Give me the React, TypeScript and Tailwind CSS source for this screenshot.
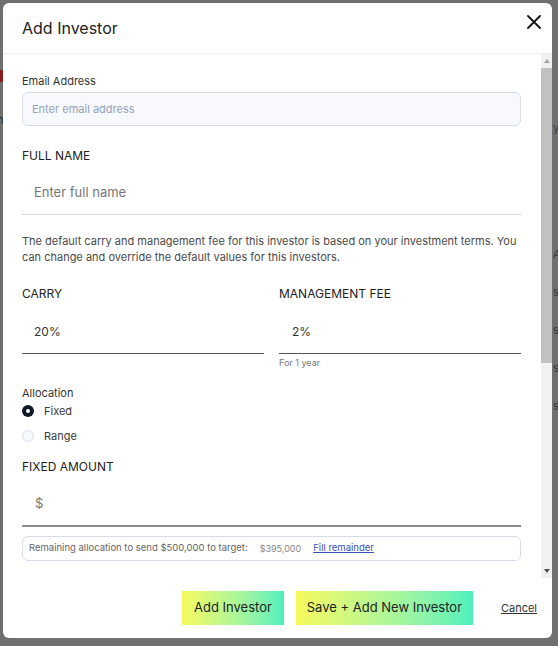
import React from "react";

function Radio({ checked, label }: { checked: boolean; label: string }) {
  return (
    <div className="flex items-center h-[18px]">
      {checked ? (
        <span className="w-[12px] h-[12px] rounded-full bg-[#111827] flex items-center justify-center">
          <span className="w-[4px] h-[4px] rounded-full bg-white" />
        </span>
      ) : (
        <span className="w-[12px] h-[12px] rounded-full border border-[#d9dee8] bg-[#f8f9fc]" />
      )}
      <span className="ml-[10px] text-[11px] text-[#3a3a3a] leading-4">{label}</span>
    </div>
  );
}

export default function App() {
  return (
    <div className="relative w-[558px] h-[646px] overflow-hidden bg-[#6f6f6f] font-['Inter',sans-serif]">
      {/* background page peeking */}
      <div className="absolute left-0 top-[70px] w-[3px] h-[12px] bg-[#8a1c1c]" />
      <div className="absolute left-[-3px] top-[112px] text-[11px] text-[#2a2a2a]">n</div>
      <div className="absolute left-[553px] top-[0px] flex flex-col text-[11px] text-[#3a3a3a] leading-4">
        <span className="mt-[120px]">y</span>
        <span className="mt-[110px]">A</span>
        <span className="mt-[22px]">s</span>
        <span className="mt-[22px]">s</span>
        <span className="mt-[22px]">s</span>
        <span className="mt-[22px]">s</span>
      </div>

      <div className="absolute left-[3px] top-[3px] w-[549px] h-[635px] bg-white rounded-[6px] flex flex-col overflow-hidden">
        {/* header */}
        <div className="h-[51px] shrink-0 flex items-center justify-between pl-[19px] pr-[11px] border-b border-[#efefef]">
          <h2 className="mt-[0px] text-[16px] text-[#222222] font-normal">Add Investor</h2>
          <svg width="14" height="14" viewBox="0 0 14 14" className="mt-[-12px]">
            <path d="M1 1L13 13M13 1L1 13" stroke="#111" strokeWidth="1.8" strokeLinecap="round" />
          </svg>
        </div>

        {/* body */}
        <div className="flex-1 min-h-0 flex">
          <div className="flex-1 min-w-0 pl-[19px] pr-[20px] flex flex-col">
            <label className="mt-[19px] text-[11px] leading-4 text-[#333]">Email Address</label>
            <div className="mt-[3px] h-[34px] rounded-[6px] border border-[#d6dcea] bg-[#f7f9fc] flex items-center pl-[9px]">
              <span className="mt-[1px] text-[11px] text-[#98a2b8]">Enter email address</span>
            </div>

            <div className="mt-[22px] text-[12px] leading-4 text-[#222]">FULL NAME</div>
            <div className="mt-[6px] h-[45px] border-b border-[#d4d4d4] flex items-center pl-[12px]">
              <span className="mt-[2px] text-[13px] text-[#777]">Enter full name</span>
            </div>

            <p className="mt-[18px] text-[11px] leading-4 text-[#4a4a4a]">
              The default carry and management fee for this investor is based on your investment terms. You can change and override the default values for this investors.
            </p>

            <div className="mt-[21px] grid grid-cols-[242px_242px] gap-x-[15px]">
              <div className="flex flex-col">
                <div className="text-[12px] leading-4 text-[#222]">CARRY</div>
                <div className="mt-[6px] h-[46px] border-b border-[#555] flex items-center pl-[12px]">
                  <span className="mt-[2px] text-[12px] text-[#333]">20%</span>
                </div>
              </div>
              <div className="flex flex-col">
                <div className="text-[12px] leading-4 text-[#222]">MANAGEMENT FEE</div>
                <div className="mt-[6px] h-[46px] border-b border-[#555] flex items-center pl-[13px]">
                  <span className="mt-[2px] text-[12px] text-[#333]">2%</span>
                </div>
                <div className="mt-[2px] text-[9px] leading-[14px] text-[#777]">For 1 year</div>
              </div>
            </div>

            <div className="mt-[15px] text-[11px] leading-4 text-[#333]">Allocation</div>
            <div className="mt-[1px]">
              <Radio checked label="Fixed" />
            </div>
            <div className="mt-[7px]">
              <Radio checked={false} label="Range" />
            </div>

            <div className="mt-[14px] text-[12px] leading-4 text-[#222]">FIXED AMOUNT</div>
            <div className="mt-[6px] h-[46px] border-b-2 border-[#8a8a8a] flex items-center pl-[13px]">
              <span className="mt-[2px] text-[13px] text-[#777]">$</span>
            </div>

            <div className="mt-[9px] h-[25px] shrink-0 rounded-[6px] border border-[#d6dcea] flex items-center pl-[6px] text-[9.5px] text-[#666]">
              <span>Remaining allocation to send $500,000 to target:</span>
              <span className="ml-[12px] text-[9px] text-[#888]">$395,000</span>
              <span className="ml-[12px] text-[#3a4fc0] underline">Fill remainder</span>
            </div>
          </div>

          {/* scrollbar */}
          <div className="w-[11px] shrink-0 bg-[#f1f1f1] flex flex-col">
            <div className="h-[14px] flex items-center justify-center">
              <svg width="6" height="4" viewBox="0 0 6 4"><path d="M0 4L3 0L6 4Z" fill="#a3a3a3" /></svg>
            </div>
            <div className="h-[295px] bg-[#c1c1c1]" />
            <div className="flex-1" />
            <div className="h-[14px] flex items-center justify-center">
              <svg width="6" height="4" viewBox="0 0 6 4"><path d="M0 0L6 0L3 4Z" fill="#505050" /></svg>
            </div>
          </div>
        </div>

        {/* footer */}
        <div className="h-[60px] shrink-0 flex items-center justify-end pr-[15px]">
          <button className="h-[34px] w-[102px] bg-gradient-to-r from-[#f6fa5a] to-[#4cf0bd] text-[13px] text-[#222]">
            Add Investor
          </button>
          <button className="ml-[12px] h-[34px] w-[177px] bg-gradient-to-r from-[#f6fa5a] to-[#4cf0bd] text-[13px] text-[#222]">
            Save + Add New Investor
          </button>
          <button className="ml-[28px] text-[11px] text-[#333] underline">Cancel</button>
        </div>
      </div>
    </div>
  );
}
